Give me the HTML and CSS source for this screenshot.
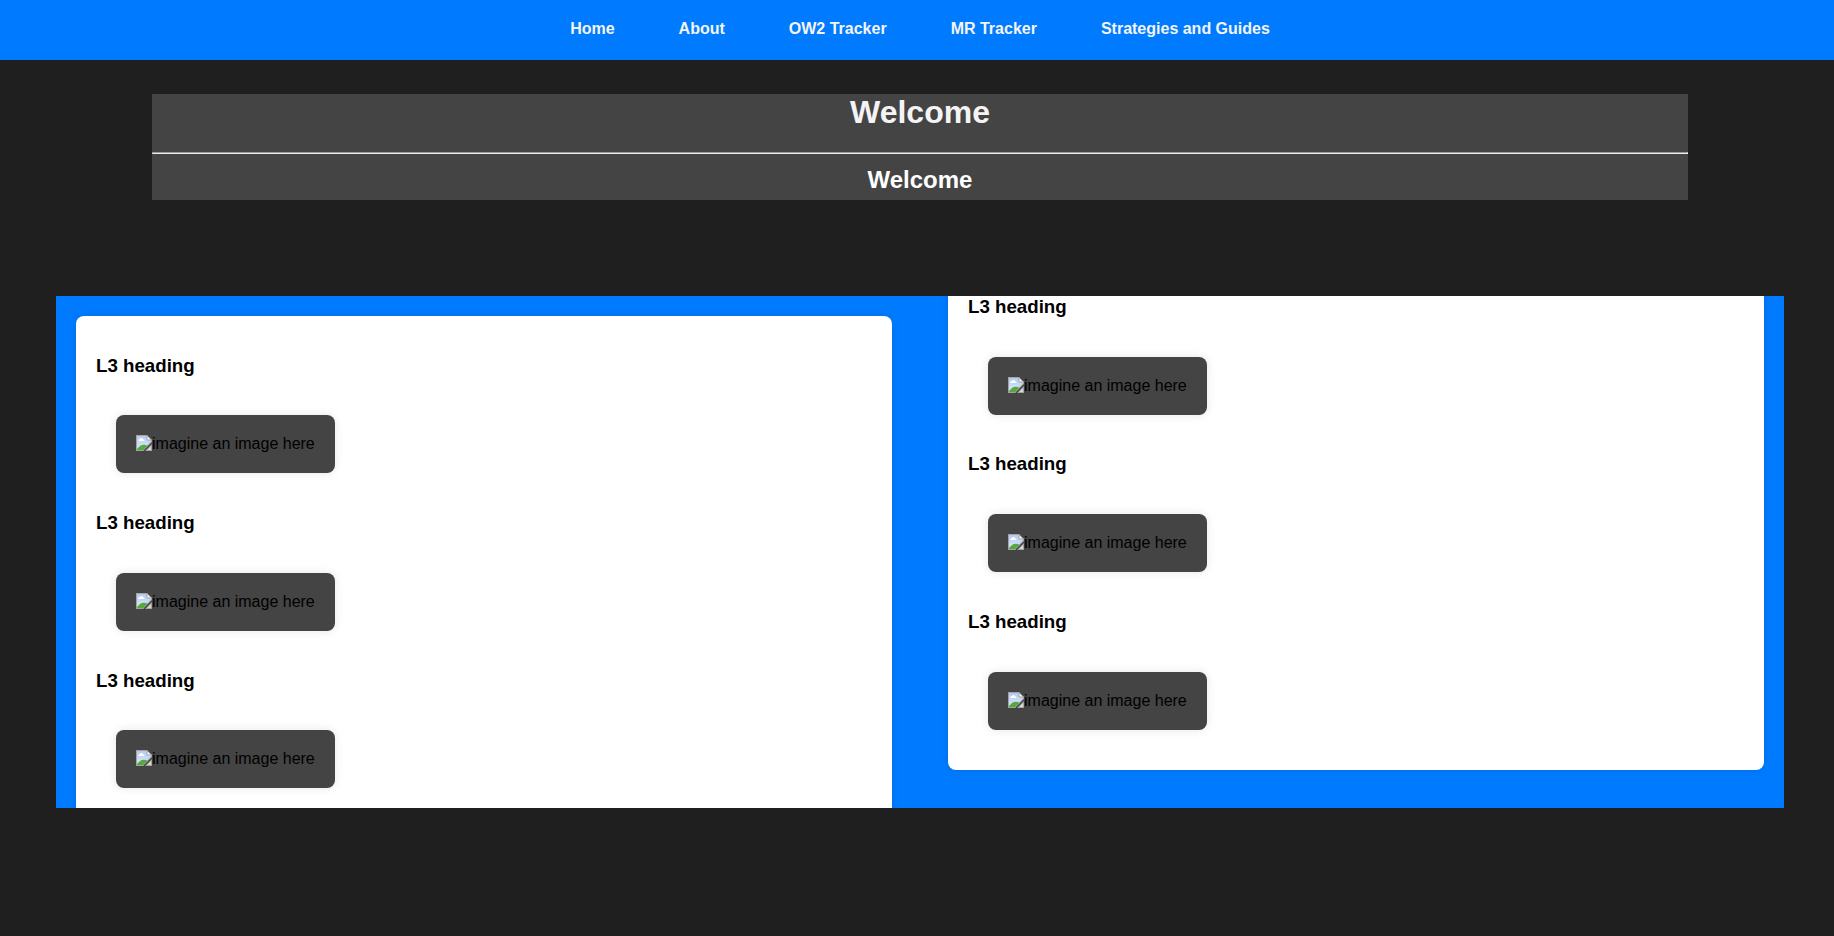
FILE: index.html
```
<!DOCTYPE html>
<html lang="en">
<head>
<meta charset="utf-8">
<title>Welcome</title>
<link rel="stylesheet" href="styles.css">
</head>
<body>
<svg width="0" height="0" class="sprite" aria-hidden="true">
  <linearGradient id="sky" x1="0" y1="0" x2="0" y2="1">
    <stop offset="0" stop-color="#b4cbf5"/>
    <stop offset="1" stop-color="#dde7fb"/>
  </linearGradient>
  <symbol id="broken" viewBox="0 0 16 16">
    <path d="M0 0H11L16 5V7L7 16H0Z" fill="#a3a3a3"/>
    <path d="M1 1H11V5H15V6.500L6.500 15H1Z" fill="url(#sky)"/>
    <path d="M2.500 6V5Q2.500 4 4 4Q5 2.500 6.300 3.200Q7.200 3.500 7 4.300Q8.500 4.500 8.500 6Z" fill="#fff"/>
    <path d="M1 15V14Q4.500 9.500 8 9.700Q10 9.800 11.300 10.700L7 15Z" fill="#55ab38"/>
    <path d="M11 1L15 5H11Z" fill="#fff"/>
    <path d="M11 0V5H16" fill="none" stroke="#a3a3a3"/>
    <path d="M16 9V16H9L10 15Z" fill="#a3a3a3"/>
    <path d="M15 11V15H11Z" fill="#cfe0d0"/>
    <path d="M0 15H8L7 16H0Z" fill="#a3a3a3"/>
  </symbol>
</svg>
<nav class="nav">
  <a href="#home">Home</a>
  <a href="#about">About</a>
  <a href="#ow2">OW2 Tracker</a>
  <a href="#mr">MR Tracker</a>
  <a href="#guides">Strategies and Guides</a>
</nav>
<main class="main">
  <header class="intro">
    <h1>Welcome</h1>
    <hr>
    <h2>Welcome</h2>
  </header>
  <section class="panel">
    <div class="card">
      <h3>L3 heading</h3>
      <div class="media"><div class="figure"><svg class="icon" aria-hidden="true"><use href="#broken"/></svg><span>imagine an image here</span></div></div>
      <h3>L3 heading</h3>
      <div class="media"><div class="figure"><svg class="icon" aria-hidden="true"><use href="#broken"/></svg><span>imagine an image here</span></div></div>
      <h3>L3 heading</h3>
      <div class="media"><div class="figure"><svg class="icon" aria-hidden="true"><use href="#broken"/></svg><span>imagine an image here</span></div></div>
      <h3>L3 heading</h3>
      <div class="media"><div class="figure"><svg class="icon" aria-hidden="true"><use href="#broken"/></svg><span>imagine an image here</span></div></div>
      <h3>L3 heading</h3>
      <div class="media"><div class="figure"><svg class="icon" aria-hidden="true"><use href="#broken"/></svg><span>imagine an image here</span></div></div>
      <h3>L3 heading</h3>
      <div class="media"><div class="figure"><svg class="icon" aria-hidden="true"><use href="#broken"/></svg><span>imagine an image here</span></div></div>
    </div>
  </section>
</main>
</body>
</html>
```
FILE: styles.css
```
body {
  margin: 0;
  background: #1f1f1f;
  font-family: "Liberation Sans", Arial, sans-serif;
  font-size: 16px;
}

.sprite {
  position: absolute;
}

.nav {
  display: flex;
  justify-content: center;
  gap: 64px;
  padding: 20px 0 22px 6px;
  background: #007bff;
  line-height: 18px;
}

.nav a {
  color: #f4f4f4;
  font-weight: bold;
  text-decoration: none;
}

.main {
  padding: 34px 0 0 6px;
}

.intro {
  margin: 0 146px 96px;
  background: #444;
  text-align: center;
}

.intro h1 {
  margin: 0 0 21px;
  color: #f4f4f4;
  font-size: 32px;
  line-height: 37px;
}

.intro hr {
  margin: 0;
}

.intro h2 {
  margin: 0;
  padding: 12px 0 7px;
  color: #fff;
  font-size: 24px;
  line-height: 27px;
}

.panel {
  margin: 0 50px;
  columns: 2;
  column-gap: 16px;
  background: #007bff;
}

.card {
  margin: 20px;
  padding: 20px;
  border-radius: 8px;
  background: #fff;
  box-shadow: 0 0 10px rgba(0, 0, 0, 0.1);
}

.card h3 {
  line-height: 22px;
  break-after: avoid;
}

.media {
  padding: 20px;
  break-inside: avoid;
}

.figure {
  display: flex;
  align-items: flex-start;
  width: fit-content;
  padding: 20px;
  border-radius: 8px;
  background: #444;
  color: #000;
  line-height: 18px;
  box-shadow: 0 0 10px rgba(0, 0, 0, 0.1);
}

.icon {
  width: 16px;
  height: 16px;
}
```
